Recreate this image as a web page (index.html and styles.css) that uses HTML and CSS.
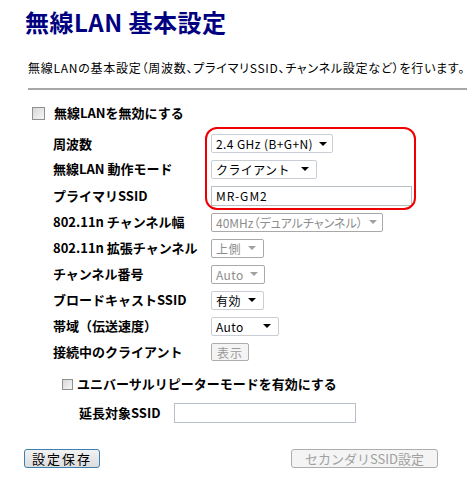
FILE: index.html
```html
<!DOCTYPE html>
<html lang="ja">
<head>
    <meta charset="UTF-8">
    <title>無線LAN 基本設定</title>
    <link rel="stylesheet" href="styles.css">
</head>
<body>
    <h1 class="title">無線LAN 基本設定</h1>
    <p class="intro">無線LANの基本設定（周波数、プライマリSSID、チャンネル設定など）を行います。</p>
    <hr class="rule">

    <div class="form">
        <label class="check-row">
            <input type="checkbox" class="check">
            <span class="label">無線LANを無効にする</span>
        </label>

        <div class="settings">
            <span class="label">周波数</span>
            <div class="select w122"><span>2.4 GHz (B+G+N)</span><i class="arrow"></i></div>

            <span class="label">無線LAN 動作モード</span>
            <div class="select w106"><span>クライアント</span><i class="arrow"></i></div>

            <span class="label">プライマリSSID</span>
            <input type="text" class="text w201" value="MR-GM2">

            <span class="label">802.11n チャンネル幅</span>
            <div class="select w172 disabled"><span class="tight">40MHz（デュアルチャンネル）</span><i class="arrow"></i></div>

            <span class="label">802.11n 拡張チャンネル</span>
            <div class="select w53 disabled"><span>上側</span><i class="arrow"></i></div>

            <span class="label">チャンネル番号</span>
            <div class="select w54 disabled"><span>Auto</span><i class="arrow"></i></div>

            <span class="label">ブロードキャストSSID</span>
            <div class="select w53"><span>有効</span><i class="arrow"></i></div>

            <span class="label">帯域（伝送速度）</span>
            <div class="select w68"><span>Auto</span><i class="arrow"></i></div>

            <span class="label">接続中のクライアント</span>
            <div><button class="small-btn" disabled>表示</button></div>

            <!-- 赤枠の注記 -->
            <div class="highlight"></div>
        </div>

        <label class="check-row repeater">
            <input type="checkbox" class="check small">
            <span class="label">ユニバーサルリピーターモードを有効にする</span>
        </label>

        <div class="extend-row">
            <span class="label">延長対象SSID</span>
            <input type="text" class="text w182">
        </div>
    </div>

    <div class="buttons">
        <button class="btn primary">設定保存</button>
        <button class="btn" disabled>セカンダリSSID設定</button>
    </div>
</body>
</html>
```

FILE: styles.css
```css
body {
    margin: 0;
    font-family: "Noto Sans CJK JP", "Noto Sans", sans-serif;
    font-size: 12px;
    color: #000;
    background: #fff;
    width: 467px;
    overflow: hidden;
}

.title {
    margin: 10px 0 0 25px;
    font-size: 24px;
    line-height: 24px;
    font-weight: bold;
    color: #000080;
    letter-spacing: 0.5px;
}

.intro {
    margin: 26px 0 0 28px;
    line-height: 16px;
    white-space: nowrap;
    font-feature-settings: "palt";
    letter-spacing: 0.75px;
}

.rule {
    margin: 12px 0 0 28px;
    border: none;
    height: 2px;
    background: #a8a8a8;
}

.form {
    margin-left: 32px;
}

.label {
    font-weight: bold;
    font-size: 13px;
    line-height: 16px;
    white-space: nowrap;
}

.check-row {
    display: flex;
    align-items: center;
    margin-top: 15px;
    height: 16px;
}

.check {
    appearance: none;
    margin: 0 9px 0 0;
    width: 13px;
    height: 13px;
    border: 1px solid #8e8f8f;
    background: linear-gradient(135deg, #d8d8d8, #f6f6f6);
    box-sizing: border-box;
}

.check.small {
    width: 11px;
    height: 11px;
    margin-right: 4px;
}

.settings {
    position: relative;
    display: grid;
    grid-template-columns: 158px auto;
    grid-template-rows: 25px 26px 27px repeat(6, 26px);
    align-items: center;
    justify-items: start;
    margin: 10px 0 0 21px;
}

.highlight {
    position: absolute;
    left: 152px;
    top: -4px;
    width: 211px;
    height: 83px;
    border: 2px solid #ee0000;
    border-radius: 12px;
    box-sizing: border-box;
}

.select {
    display: flex;
    align-items: center;
    justify-content: space-between;
    height: 19px;
    box-sizing: border-box;
    padding: 0 7px 0 4px;
    border: 1px solid #c9ced4;
    border-radius: 2px;
    background: #fff;
    font-size: 12px;
    letter-spacing: 0.4px;
    white-space: nowrap;
    overflow: hidden;
}

.select .tight {
    font-feature-settings: "palt";
    letter-spacing: 0;
}

.select.disabled {
    color: #8d8d8d;
    border-color: #a9a9a9;
}

.arrow {
    flex: none;
    width: 0;
    height: 0;
    border-left: 4px solid transparent;
    border-right: 4px solid transparent;
    border-top: 4px solid #000;
    margin-left: 6px;
}

.select.disabled .arrow {
    border-top-color: #a0a0a0;
}

.text {
    height: 20px;
    box-sizing: border-box;
    border: 1px solid #b8bfc6;
    padding: 0 4px;
    font-family: inherit;
    font-size: 12px;
    letter-spacing: 1px;
}

.w53 { width: 53px; }
.w54 { width: 54px; }
.w68 { width: 68px; }
.w106 { width: 106px; }
.w122 { width: 122px; }
.w172 { width: 172px; }
.w182 { width: 182px; }
.w201 { width: 201px; }

.small-btn {
    width: 38px;
    height: 18px;
    padding: 0;
    font-family: inherit;
    font-size: 12px;
    color: #9a9a9a;
    background: #f4f4f4;
    border: 1px solid #adadad;
    border-radius: 2px;
    letter-spacing: 1px;
}

.repeater {
    margin: 11px 0 0 30px;
}

.extend-row {
    display: flex;
    align-items: center;
    margin: 11px 0 0 47px;
    height: 20px;
}

.extend-row .label {
    margin-right: 13px;
}

.buttons {
    display: flex;
    justify-content: space-between;
    width: 414px;
    margin: 26px 0 0 24px;
}

.btn {
    height: 19px;
    padding: 0;
    font-family: inherit;
    font-size: 13px;
    line-height: 15px;
    letter-spacing: 2px;
    border-radius: 3px;
    box-sizing: border-box;
}

.btn.primary {
    width: 76px;
    border: 1px solid #3c7fb1;
    background: linear-gradient(#f2f2f2, #dcdcdc);
    color: #000;
}

.btn:disabled {
    width: 147px;
    border: 1px solid #adadad;
    background: #f4f4f4;
    color: #a0a0a0;
    letter-spacing: 0;
}
```
